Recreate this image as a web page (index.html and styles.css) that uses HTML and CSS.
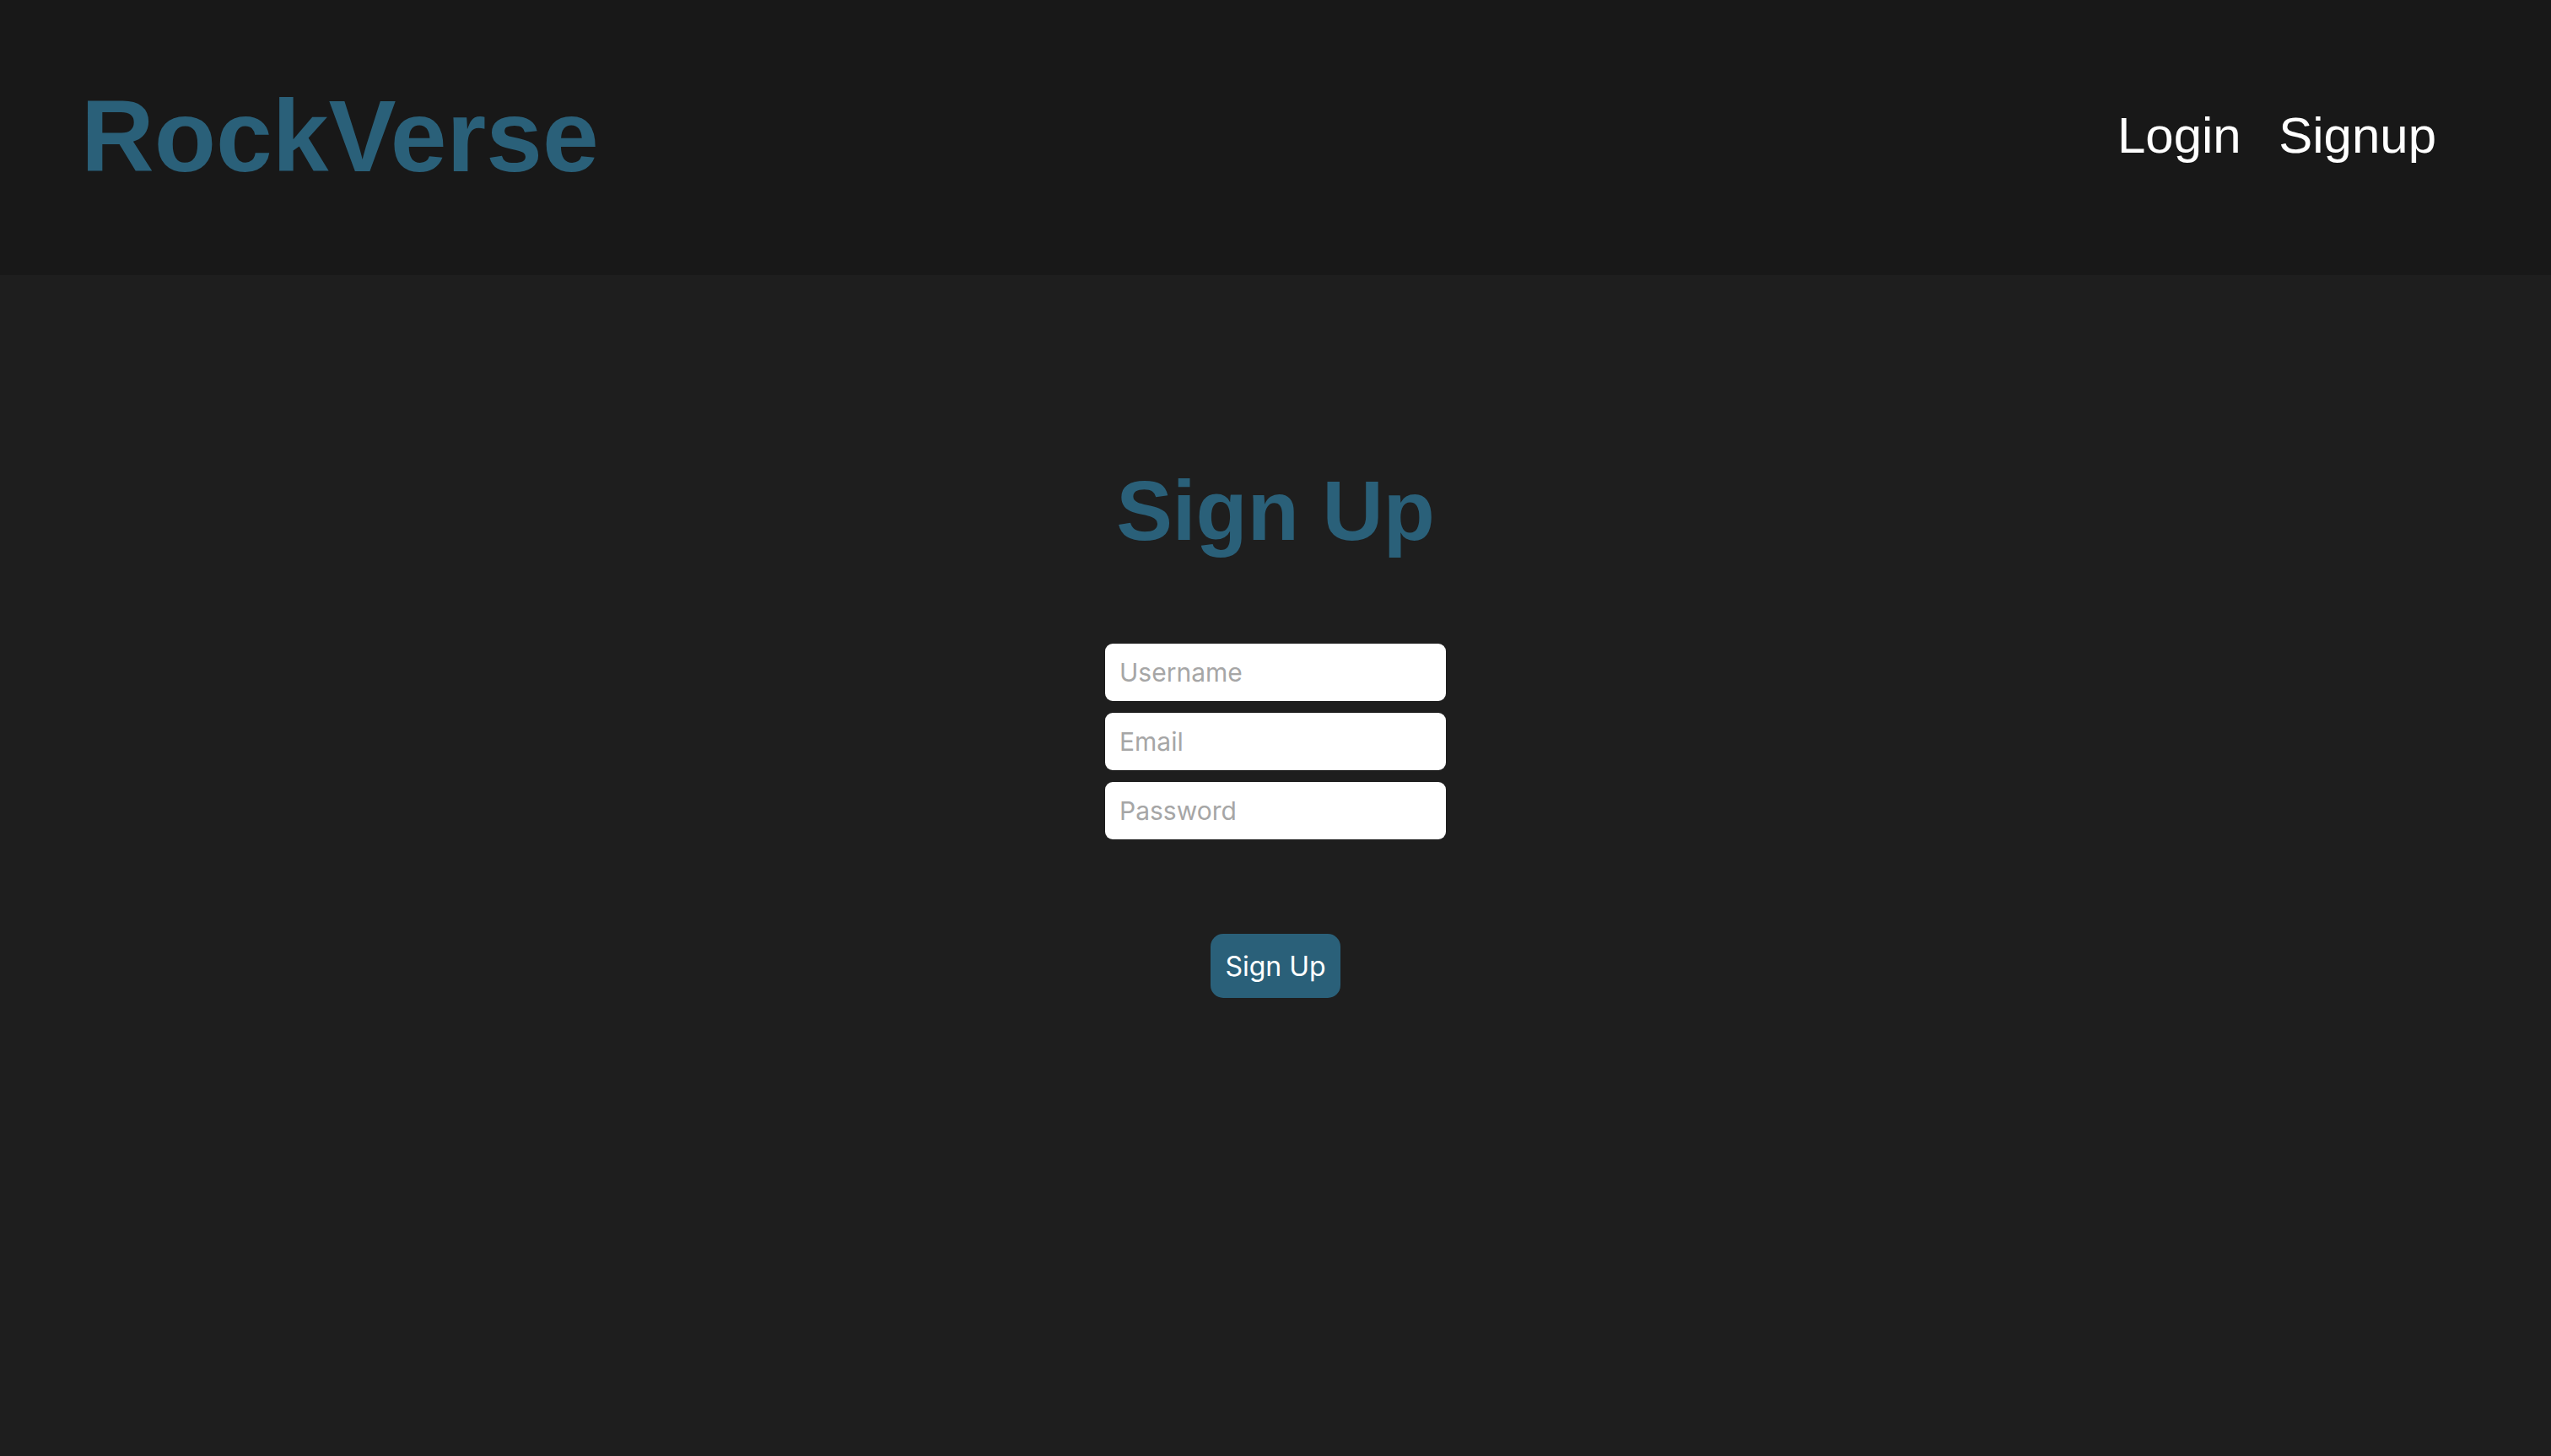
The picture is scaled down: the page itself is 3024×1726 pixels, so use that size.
FILE: index.html
```html
<!DOCTYPE html>
<html>
    <head>
        <title>Sign Up</title>
        <link rel="stylesheet" href="styles.css">
    </head>
    <body>
        <div class="topBar">
            <h1 class="logo">RockVerse</h1>
            <div class="navLinks">
                <a href="login.html">Login</a>
                <a href="signup.html">Signup</a>
            </div>
        </div>

        <div class="signupPage">
            <h2 class="signupTitle">Sign Up</h2>
            <form class="signupForm">
                <input type="text" placeholder="Username" name="username" id="username" required>
                <input type="email" placeholder="Email" name="email" id="email" required>
                <input type="password" placeholder="Password" name="password" id="password" required>
                <button type="button" class="signupBtn" id="signupBtn">Sign Up</button>
            </form>
        </div>
    </body>
</html>
```

FILE: styles.css
```css
body{
    margin:0;
    min-height:100vh;
    background:#1e1e1e;
    font-family:"Liberation Sans", Arial, sans-serif;
}
.topBar{
    display:flex;
    justify-content:space-between;
    align-items:center;
    height:326px;
    padding:0 96px;
    background:#181818;
}
.logo{
    margin:0 0 4px 0;
    font-size:120px;
    font-weight:bold;
    color:#2a6079;
}
.navLinks{
    padding-bottom:6px;
}
.navLinks a{
    margin-right:40px;
    font-size:60px;
    color:white;
    text-decoration:none;
}
.signupPage{
    display:flex;
    flex-direction:column;
    align-items:center;
    padding-top:229px;
}
.signupTitle{
    margin:0;
    font-size:100px;
    line-height:1;
    font-weight:bold;
    color:#2a6079;
}
.signupForm{
    display:flex;
    flex-direction:column;
    align-items:center;
    gap:14px;
    margin-top:108px;
}
input{
    box-sizing:border-box;
    width:404px;
    height:68px;
    padding:0 17px;
    border:none;
    border-radius:9px;
    font-family:Inter, "Noto Sans", sans-serif;
    font-size:30px;
    background:white;
}
input::placeholder{
    color:#a6a6a6;
}
.signupBtn{
    box-sizing:border-box;
    width:154px;
    height:76px;
    margin-top:98px;
    border:none;
    border-radius:15px;
    background:#2a6079;
    color:white;
    font-family:Inter, "Noto Sans", sans-serif;
    font-size:32px;
}
```
